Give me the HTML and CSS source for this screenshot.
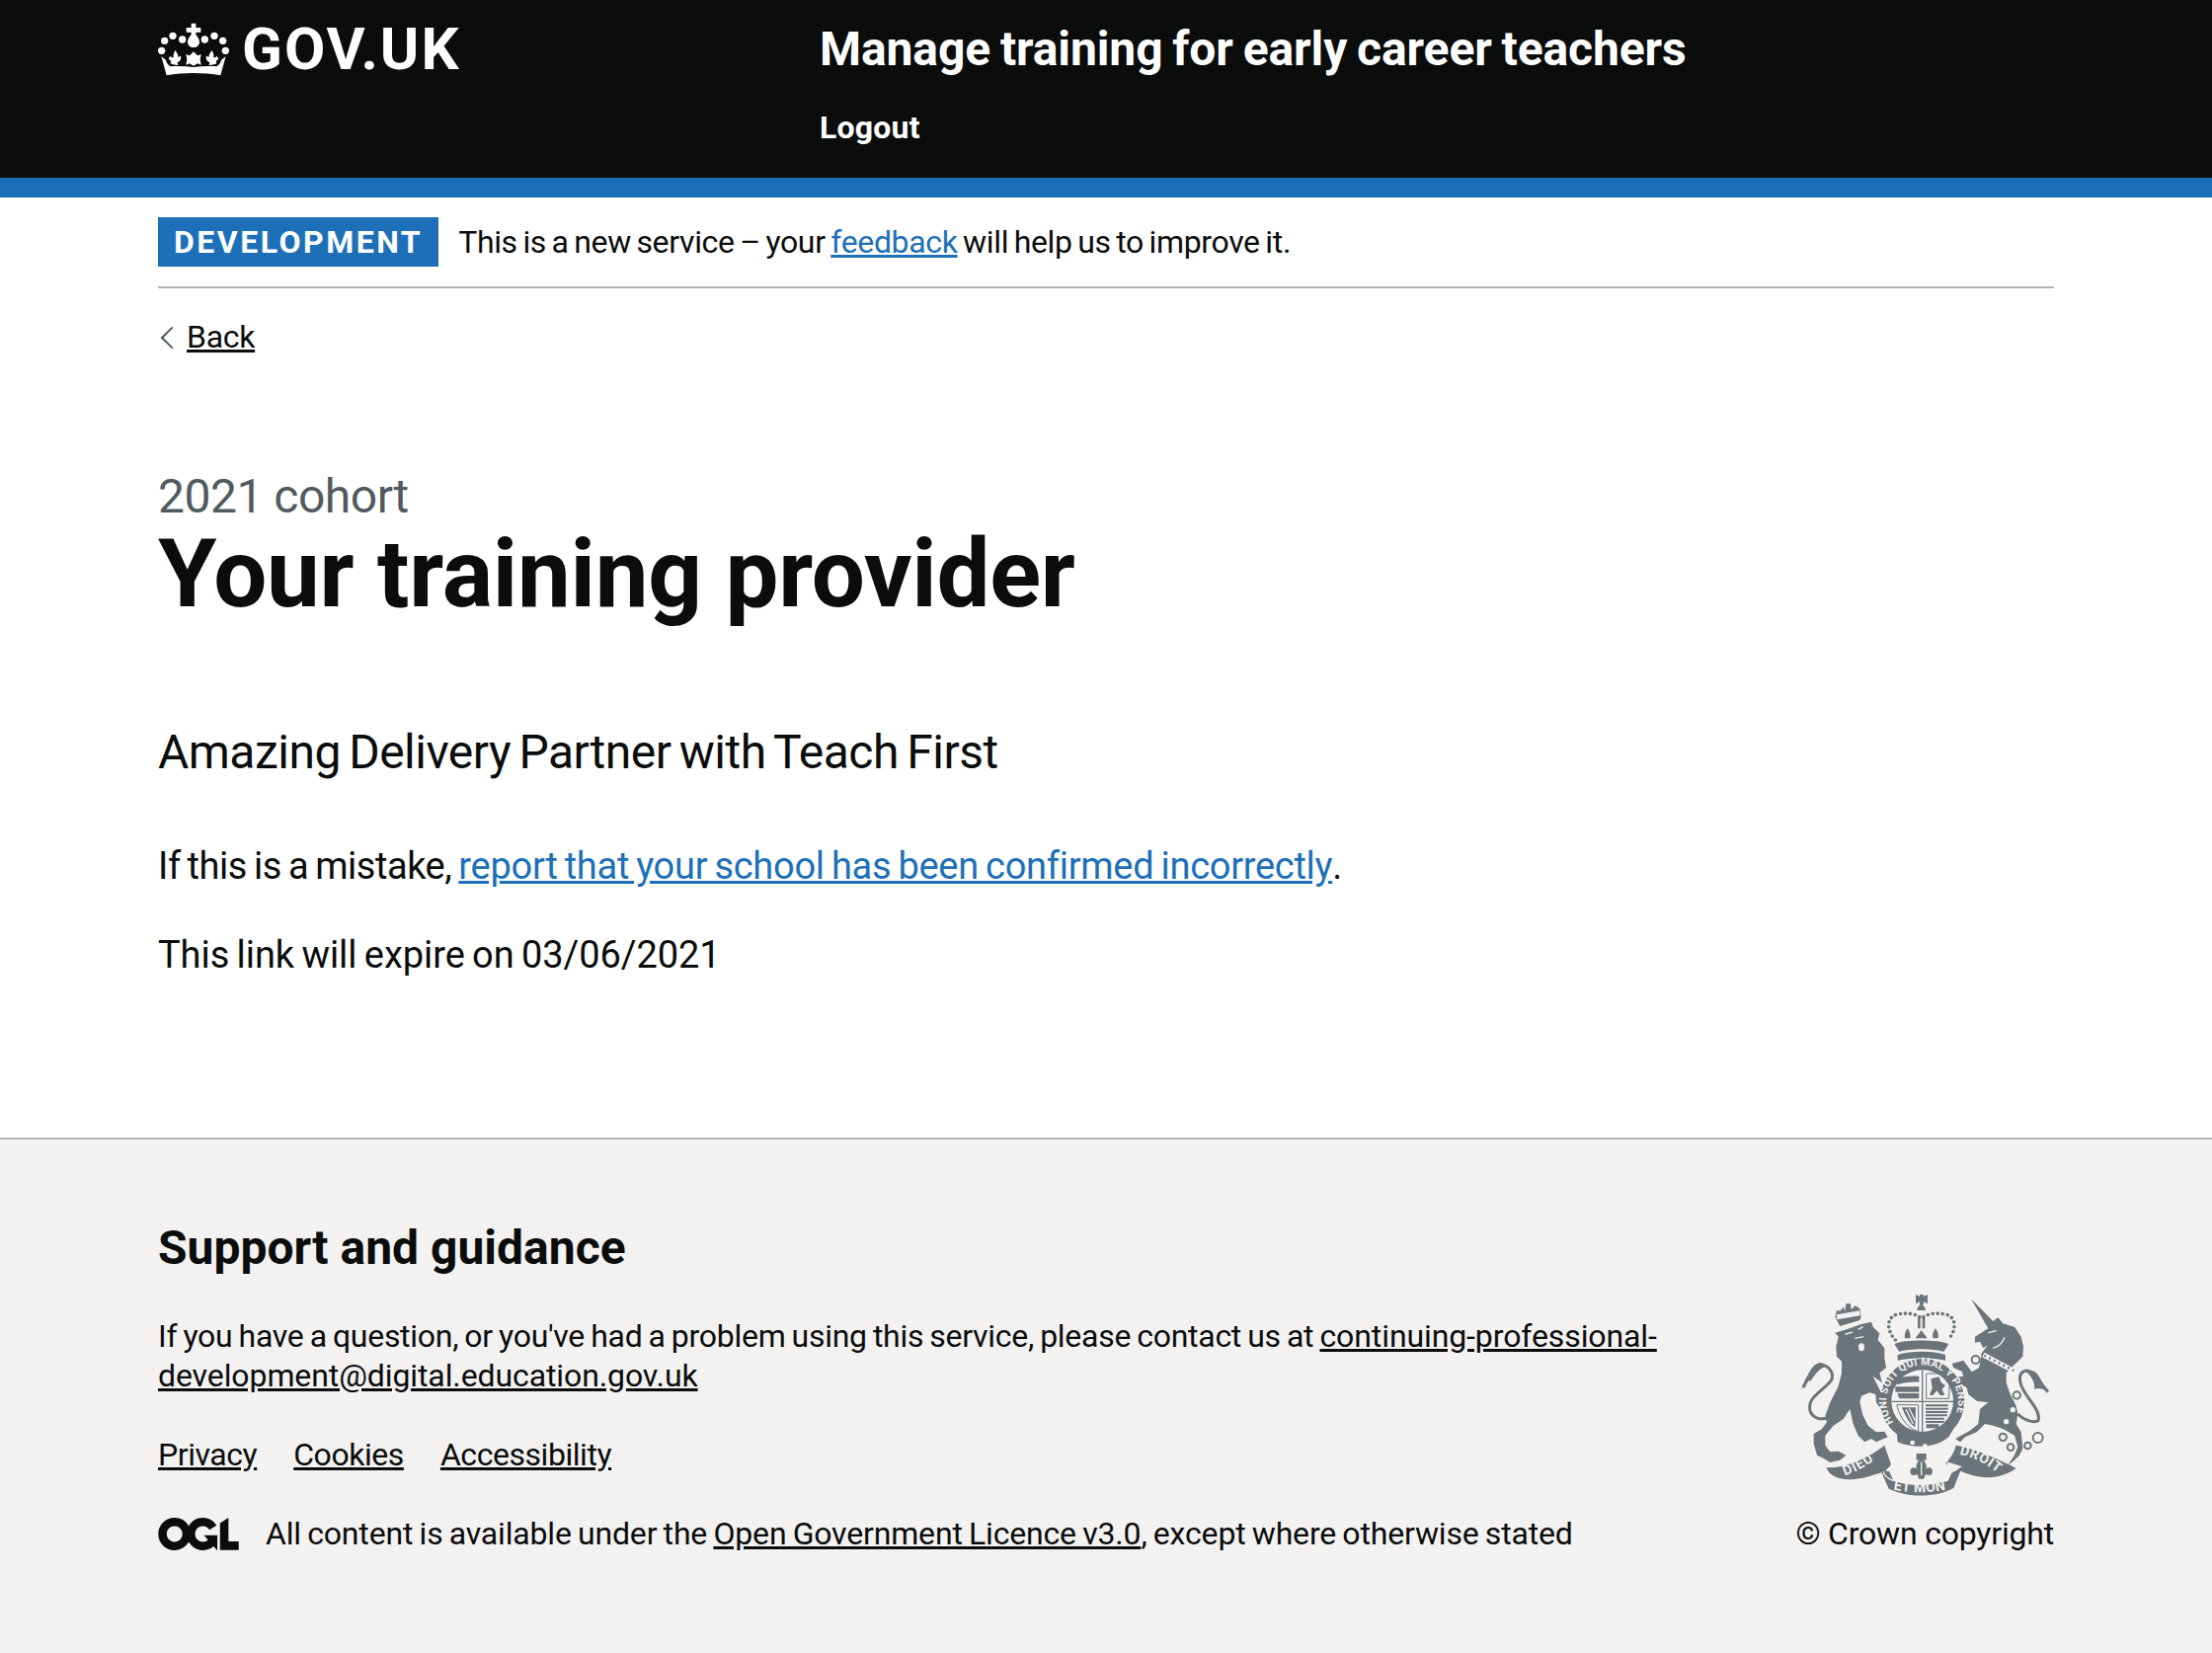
FILE: index.html
```html
<!DOCTYPE html>
<html lang="en">
  <head>
    <meta charset="UTF-8" />
    <title>Your training provider</title>
    <link rel="stylesheet" href="styles.css">
  </head>

  <body>
    <header class="header">
      <div class="container header-row">
        <a class="logo" href="#">
          <svg class="crown" viewBox="60 65 216 165" aria-hidden="true">
            <g fill="#fff">
              <circle cx="71" cy="153" r="11"/><circle cx="80" cy="123" r="11"/><circle cx="105" cy="108" r="11"/><circle cx="134" cy="119" r="11"/>
              <circle cx="202" cy="119" r="11"/><circle cx="231" cy="108" r="11"/><circle cx="257" cy="123" r="11"/><circle cx="265" cy="153" r="11"/>
              <path d="M161 70h14v13h15v14h-15v8c6 6 11 14 11 22 0 9-8 16-18 16s-18-7-18-16c0-8 5-16 11-22v-8h-15V83h15z"/>
              <path d="M168 156l12 12 11-4-3 16 3 16-11-4-12 7-12-7-11 4 3-16-3-16 11 4z"/>
              <path d="M112 152c6 8 10 13 9 20l8-3c3 9-3 18-11 20l4 8c-10 0-18-1-24-5 3-8 0-11-6-13 1-4 2-7 6-9 3 4 7 5 9 2-1-6 1-13 5-20z"/>
              <path d="M224 152c-6 8-10 13-9 20l-8-3c-3 9 3 18 11 20l-4 8c10 0 18-1 24-5-3-8 0-11 6-13-1-4-2-7-6-9-3 4-7 5-9 2 1-6-1-13-5-20z"/>
              <path d="M70 170l14 12c2 8 6 14 14 19 22-2 46-1 70 2 24-3 48-4 70-2 8-5 12-11 14-19l14-12-16 58c-26-5-54-7-82-7s-56 2-82 7z"/>
            </g>
          </svg>
          <span class="logo-text">GOV.UK</span>
        </a>
        <div class="service">
          <a class="service-name" href="#">Manage training for early career teachers</a>
          <a class="nav-link" href="#">Logout</a>
        </div>
      </div>
    </header>

    <div class="container">
      <div class="phase-banner">
        <strong class="tag">Development</strong>
        <span class="phase-text">This is a new service – your <a class="link" href="#">feedback</a> will help us to improve it.</span>
      </div>
      <a class="back-link" href="#">Back</a>

      <main class="main">
        <span class="caption">2021 cohort</span>
        <h1 class="title">Your training provider</h1>
        <p class="lead">Amazing Delivery Partner with Teach First</p>
        <p class="body">If this is a mistake, <a class="link" href="#">report that your school has been confirmed incorrectly</a>.</p>
        <p class="body body-date">This link will expire on 03/06/2021</p>
      </main>
    </div>

    <footer class="footer">
      <div class="container footer-row">
        <div class="footer-meta">
          <h2 class="footer-title">Support and guidance</h2>
          <p class="footer-text">If you have a question, or you've had a problem using this service, please contact us at <a href="#">continuing-professional-<br>development@digital.education.gov.uk</a></p>
          <ul class="footer-links">
            <li><a href="#">Privacy</a></li>
            <li><a href="#">Cookies</a></li>
            <li><a href="#">Accessibility</a></li>
          </ul>
          <div class="licence">
            <svg class="ogl" viewBox="0 0 483.2 195.7" aria-hidden="true">
              <path fill="currentColor" d="M421.5 142.8V.1l-50.7 32.3v161.1h112.4v-50.7zm-122.3-9.6A47.12 47.12 0 0 1 221 97.8c0-26 21.1-47.1 47.1-47.1 16.7 0 31.4 8.7 39.7 21.8l42.7-27.2A97.63 97.63 0 0 0 268.1 0c-36.5 0-68.3 20.1-85.1 49.7A98 98 0 0 0 97.8 0C43.9 0 0 43.9 0 97.8s43.9 97.8 97.8 97.8c36.5 0 68.3-20.1 85.1-49.7a97.76 97.76 0 0 0 149.6 25.4l19.4 22.2h3v-87.8h-80l24.3 27.5zM97.8 145c-26 0-47.1-21.1-47.1-47.1s21.1-47.1 47.1-47.1 47.2 21 47.2 47S123.8 145 97.8 145"/>
            </svg>
            <span class="licence-text">All content is available under the <a href="#">Open Government Licence v3.0</a>, except where otherwise stated</span>
          </div>
        </div>

        <div class="copyright">
          <svg class="arms" viewBox="60 50 780 630" aria-hidden="true">
            <defs>
              <path id="garter" d="M352 450A109 109 0 1 1 528 450"/>
              <path id="ribbonLeft" d="M205 612Q265 592 318 545"/>
              <path id="ribbonMid" d="M350 654Q435 672 526 652"/>
              <path id="ribbonRight" d="M553 548Q620 560 680 614"/>
            </defs>
            <g class="arms-ink">
              <!-- lion -->
              <path d="M175 178L210 168L255 152L285 145L290 160L310 180L305 200L325 225L325 255L330 285L310 300L318 330L290 310L310 350L330 390L345 410L340 420L322 415L310 405L300 390L298 365L280 360L255 370L250 390L260 430L275 460L300 480L325 478L335 495L310 505L300 510L285 500L265 510L245 490L230 455L220 410L200 440L170 460L145 490L145 520L160 540L185 538L208 550L190 565L160 572L140 560L120 550L110 515L110 485L135 470L150 450L145 430L160 390L185 340L195 300L195 265L180 250L178 220L185 190Z"/>
              <path class="arms-line" d="M150 438C115 445 90 425 100 390C108 365 150 345 165 320C172 295 150 272 125 275C105 280 100 305 78 345"/>
              <path d="M72 350C85 315 105 280 125 270C135 268 145 272 150 280C125 285 115 305 100 325C95 320 85 330 72 350Z"/>
              <path d="M175 130L180 110L190 112L200 100L205 112L208 90L222 90L224 108L236 96L250 104L254 130L250 140L190 158Z"/>
              <path class="arms-gap" d="M180 130L250 118"/>
              <path class="arms-gap-thin" d="M205 183L228 176M245 168L260 160M235 195L262 190"/>
              <ellipse class="arms-paper" cx="255" cy="222" rx="9" ry="12"/>
              <!-- unicorn -->
              <path d="M588 75L655 143L670 132L685 150L720 160L740 190L747 220L745 250L720 275L695 300L695 330L705 360L725 400L730 425L725 455L740 480L745 530L735 550L715 570L700 580L720 550L730 525L720 490L685 470L655 460L630 455L605 480L570 495L555 510L540 500L585 475L610 455L615 410L640 390L605 385L580 365L575 345L545 330L530 315L565 310L560 295L535 285L530 272L565 262L590 297L612 285L615 270L620 240L640 215L625 225L615 205L600 208L600 190L640 165Z"/>
              <path class="arms-gap" d="M625 245L720 295"/>
              <path class="arms-crenel" d="M628 247L718 293"/>
              <path class="arms-gap-thin" d="M655 225C675 220 685 205 690 192M640 178L665 172"/>
              <circle class="arms-paper" cx="715" cy="412" r="8"/><circle class="arms-paper" cx="695" cy="448" r="8"/>
              <path class="arms-line" d="M730 425C745 440 775 455 792 445C800 420 770 390 755 365C735 335 725 300 755 293C775 292 790 320 822 358"/>
              <path d="M822 358C800 345 790 345 780 350C785 330 770 310 755 296C775 285 790 300 800 320C808 335 815 345 822 358Z"/>
              <g class="arms-chain">
                <circle cx="602" cy="260" r="12"/><circle cx="590" cy="345" r="12"/><circle cx="727" cy="368" r="11"/>
                <circle cx="685" cy="495" r="11"/><circle cx="708" cy="526" r="10"/><circle cx="760" cy="521" r="10"/><circle cx="791" cy="497" r="15"/>
              </g>
              <!-- crown over the shield -->
              <path d="M420 62L432 68V62H444V68L456 62V90L444 84V92H432V84L420 90Z"/>
              <path d="M437 90C445 96 450 104 450 110H424C424 104 429 96 437 90Z"/>
              <path d="M426 130H434V165H426ZM440 130H448V165H440Z"/>
              <path d="M395 165C403 175 405 185 403 195H387C385 185 387 175 395 165ZM480 165C488 175 490 185 488 195H472C470 185 472 175 480 165ZM437 170L455 195H419Z"/>
              <path d="M355 212C385 198 490 198 520 212L505 236C475 225 400 225 370 236Z"/>
              <path d="M365 245C410 232 470 232 510 245L510 262C470 252 410 252 365 262Z"/>
              <path class="arms-dots" d="M358 200C330 170 330 130 365 122C395 116 420 120 437 134C455 120 480 116 510 122C545 130 545 170 518 200"/>
              <!-- garter and shield -->
              <circle cx="440" cy="385" r="128"/>
              <circle class="arms-paper" cx="440" cy="385" r="94"/>
              <path d="M438 291H442V479H438ZM346 385H534V389H346Z"/>
              <!-- quarters: lions, scotland, harp, lions -->
              <path d="M362 318C380 310 410 308 430 310V328C410 326 380 330 362 336ZM358 342H430V358H358ZM364 362H430V378H370Z"/>
              <path class="arms-frame" d="M452 302H516C522 325 524 355 520 378H452Z"/>
              <path d="M466 318L490 312L498 330L510 338L500 350L508 368H494L484 354L472 368H462L470 346Z"/>
              <path class="arms-frame" d="M362 397H428V478C400 470 375 445 362 397Z"/>
              <path d="M378 405L420 405L418 465C400 455 388 430 378 405Z"/>
              <path class="arms-gap-thin" d="M390 410L412 455M400 408L418 445"/>
              <path d="M450 396H518V412H450ZM450 416H516V432H450ZM450 436H506V452H450ZM452 456H490V468H452Z"/>
              <path class="arms-gap-thin" d="M450 404H518M450 424H516M450 444H506"/>
              <!-- buckle -->
              <path d="M362 478C400 500 470 505 535 470L520 495C480 530 410 530 365 510Z"/>
              <circle class="arms-paper" cx="410" cy="512" r="7"/><circle class="arms-paper" cx="448" cy="522" r="7"/>
              <!-- fleur under the shield -->
              <path d="M422 545H452V565H422Z"/>
              <path d="M437 556C450 570 456 582 450 592C462 582 474 590 470 604C465 614 456 612 450 608L444 622H430L424 608C418 612 409 614 404 604C400 590 412 582 424 592C418 582 424 570 437 556Z"/>
              <path class="arms-gap-thin" d="M437 570V612"/>
              <!-- motto ribbon -->
              <path d="M148 588C205 590 275 560 325 520L345 578C335 595 315 605 298 608C250 625 170 640 148 588Z"/>
              <path d="M310 588L338 652C400 680 480 680 535 650L565 575C550 590 540 600 530 603L518 628C460 645 400 645 352 628L340 600C330 598 318 595 310 588Z"/>
              <path class="arms-gap-thin" d="M322 600C322 615 345 625 352 628"/>
              <path d="M542 520C600 530 680 565 725 590C690 615 650 622 610 615C575 610 540 590 510 575C525 560 538 540 542 520Z"/>
              <path class="arms-paper" d="M512 570C522 585 530 595 540 598L560 585C548 580 530 575 512 570Z"/>
              <!-- text on the garter and motto -->
              <text class="arms-text" font-size="32" textLength="445"><textPath href="#garter">HONI SOIT QUI MAL Y PENSE</textPath></text>
              <text class="arms-text" font-size="42" letter-spacing="3"><textPath href="#ribbonLeft">DIEU</textPath></text>
              <text class="arms-text" font-size="42" letter-spacing="1"><textPath href="#ribbonMid" startOffset="2">ET MON</textPath></text>
              <text class="arms-text" font-size="42" letter-spacing="2"><textPath href="#ribbonRight">DROIT</textPath></text>
            </g>
          </svg>
          <a href="#">© Crown copyright</a>
        </div>
      </div>
    </footer>
  </body>
</html>
```

FILE: styles.css
```css
/* Page */
body {
  margin: 0;
  font-family: Roboto, sans-serif;
  font-size: 38px;
  color: #0b0c0c;
  background-color: #fff;
}

a {
  color: inherit;
}

.container {
  margin: 0 160px;
}

/* Header */
.header {
  background-color: #0b0c0c;
  border-bottom: 20px solid #1d70b8;
  color: #fff;
  height: 180px;
}

.header-row {
  display: flex;
}

.logo {
  display: flex;
  align-items: flex-start;
  width: 670px;
  color: #fff;
  text-decoration: none;
}

.crown {
  width: 72px;
  height: 55px;
  margin-top: 22px;
  flex-shrink: 0;
}

.logo-text {
  margin-left: 13px;
  font-size: 60px;
  font-weight: 700;
  line-height: 100px;
  letter-spacing: 2px;
}

.service {
  display: flex;
  flex-direction: column;
  align-items: flex-start;
}

.service-name {
  margin-top: 20px;
  font-size: 48px;
  font-weight: 700;
  line-height: 60px;
  letter-spacing: -0.1px;
  word-spacing: -2px;
  color: #fff;
  text-decoration: none;
}

.nav-link {
  margin-top: 29px;
  font-size: 32px;
  font-weight: 700;
  line-height: 40px;
  letter-spacing: 0.2px;
  color: #fff;
  text-decoration: none;
}

/* Phase banner */
.phase-banner {
  display: flex;
  align-items: center;
  gap: 20px;
  height: 90px;
  font-size: 32px;
  border-bottom: 2px solid #b1b4b6;
}

.phase-text {
  letter-spacing: -0.35px;
  word-spacing: -2px;
}

.tag {
  height: 50px;
  padding: 0 16px;
  line-height: 50px;
  font-size: 32px;
  font-weight: 700;
  letter-spacing: 2.5px;
  text-transform: uppercase;
  color: #fff;
  background-color: #1d70b8;
}

.link {
  color: #1d70b8;
}

/* Back link */
.back-link {
  display: inline-block;
  position: relative;
  margin-top: 29px;
  padding-left: 29px;
  font-size: 32px;
  line-height: 40px;
  letter-spacing: -0.3px;
}

.back-link::before {
  content: "";
  position: absolute;
  left: 6px;
  top: 13px;
  width: 14px;
  height: 14px;
  border-left: 2px solid #505a5f;
  border-bottom: 2px solid #505a5f;
  transform: rotate(45deg);
}

/* Main content */
.main {
  padding-top: 114px;
  height: 791px;
  box-sizing: border-box;
}

.caption {
  display: block;
  font-size: 48px;
  line-height: 56px;
  letter-spacing: -0.5px;
  color: #505a5f;
}

.title {
  margin: 0 0 101px;
  font-size: 96px;
  font-weight: 700;
  line-height: 100px;
  letter-spacing: -0.25px;
}

.lead {
  margin: 0 0 60px;
  font-size: 48px;
  line-height: 60px;
  letter-spacing: -0.52px;
  word-spacing: -3px;
}

.body {
  margin: 0 0 40px;
  line-height: 50px;
  letter-spacing: -0.45px;
  word-spacing: -2px;
}

.body .link {
  letter-spacing: -0.28px;
}

.body-date {
  letter-spacing: -0.06px;
}

/* Footer */
.footer {
  background-color: #f3f2f1;
  border-top: 2px solid #b1b4b6;
  height: 522px;
  box-sizing: border-box;
  font-size: 32px;
  line-height: 40px;
}

.footer-row {
  display: flex;
  justify-content: space-between;
  padding-top: 80px;
}

.footer-meta {
  flex: 1;
}

.footer-title {
  margin: 0 0 39px;
  font-size: 48px;
  font-weight: 700;
  line-height: 60px;
}

.footer-text {
  margin: 0 0 40px;
  letter-spacing: -0.28px;
  word-spacing: -1.5px;
}

.footer-text a {
  letter-spacing: -0.1px;
}

.footer-links {
  display: flex;
  gap: 37px;
  margin: 0 0 40px;
  padding: 0;
  letter-spacing: -0.45px;
  list-style: none;
}

.licence {
  display: flex;
  align-items: center;
  gap: 27px;
}

.licence-text {
  letter-spacing: -0.17px;
  word-spacing: -1.5px;
}

.ogl {
  width: 82px;
  height: 33px;
  color: #0b0c0c;
  flex-shrink: 0;
}

.copyright {
  display: flex;
  flex-direction: column;
  align-items: flex-end;
  justify-content: flex-end;
  letter-spacing: -0.2px;
}

.copyright a {
  text-decoration: none;
}

/* Royal arms */
.arms {
  width: 260px;
  height: 210px;
  margin-bottom: 16px;
}

.arms-ink {
  fill: #6b7579;
}

.arms-paper {
  fill: #f3f2f1;
}

.arms-line,
.arms-chain,
.arms-dots,
.arms-gap,
.arms-gap-thin,
.arms-crenel,
.arms-frame {
  fill: none;
}

.arms-line {
  stroke: #6b7579;
  stroke-width: 9;
}

.arms-chain {
  stroke: #6b7579;
  stroke-width: 6;
}

.arms-dots {
  stroke: #6b7579;
  stroke-width: 11;
  stroke-linecap: round;
  stroke-dasharray: 0 15;
}

.arms-gap {
  stroke: #f3f2f1;
  stroke-width: 15;
}

.arms-gap-thin {
  stroke: #f3f2f1;
  stroke-width: 4;
}

.arms-crenel {
  stroke: #6b7579;
  stroke-width: 7;
  stroke-dasharray: 6 10;
}

.arms-frame {
  stroke: #6b7579;
  stroke-width: 3;
}

.arms-text {
  fill: #f3f2f1;
  font-family: Roboto, sans-serif;
  font-weight: 700;
}
```
